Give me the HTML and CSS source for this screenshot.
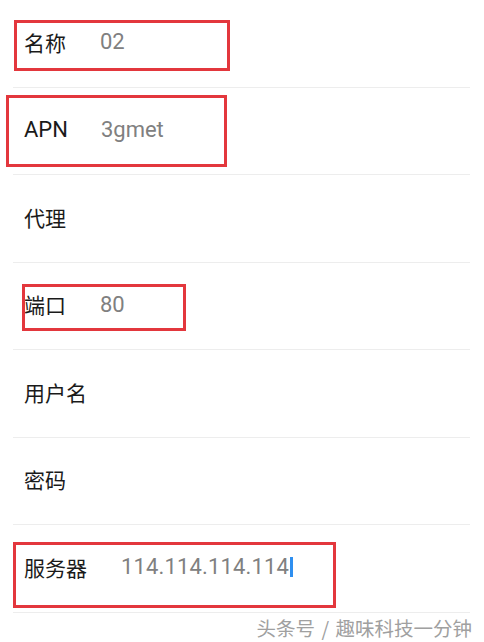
FILE: index.html
```html
<!DOCTYPE html>
<html lang="zh-CN">
<head>
<meta charset="utf-8">
<title>APN 设置</title>
<link rel="stylesheet" href="styles.css">
</head>
<body>
<div class="screen">
  <ul class="list">
    <li class="row"><span class="label">名称</span><span class="value">02</span></li>
    <li class="row"><span class="label latin">APN</span><span class="value">3gmet</span></li>
    <li class="row"><span class="label">代理</span></li>
    <li class="row"><span class="label">端口</span><span class="value">80</span></li>
    <li class="row"><span class="label">用户名</span></li>
    <li class="row"><span class="label">密码</span></li>
    <li class="row"><span class="label">服务器</span><span class="value wide">114.114.114.114<span class="caret"></span></span></li>
  </ul>
  <div class="mark mark-1"></div>
  <div class="mark mark-2"></div>
  <div class="mark mark-3"></div>
  <div class="mark mark-4"></div>
  <div class="watermark">头条号 / 趣味科技一分钟</div>
</div>
</body>
</html>
```

FILE: styles.css
```css
* { box-sizing: border-box; }
html, body { margin: 0; padding: 0; background: #fff; }
body {
  font-family: Roboto, "Noto Sans CJK SC", sans-serif;
  color: #1a1a1a;
}
.screen {
  position: relative;
  width: 484px;
  height: 642px;
  overflow: hidden;
  background: #fff;
}
.list {
  list-style: none;
  margin: 0 14px 0 13px;
  padding: 0;
}
.row {
  display: flex;
  align-items: center;
  height: 87.5px;
  padding-left: 11px;
  padding-bottom: 2px;
  border-bottom: 1px solid #ededed;
}
.label {
  font-family: "Noto Sans CJK SC", sans-serif;
  font-size: 21px;
  color: #1a1a1a;
  margin-right: 34px;
  line-height: 1;
}
.label.latin {
  font-family: Roboto, sans-serif;
  font-size: 22px;
  margin-right: 33px;
}
.value {
  font-family: Roboto, sans-serif;
  font-size: 22px;
  color: #808080;
  line-height: 1;
  display: inline-flex;
  align-items: center;
}
.value.wide { letter-spacing: 0.15px; }
.caret {
  display: inline-block;
  width: 3px;
  height: 20px;
  background: #2e8ff0;
  margin-left: 1px;
}
.mark {
  position: absolute;
  border: 3px solid #e3373d;
}
.mark-1 { left: 14px; top: 20px; width: 216px; height: 51px; }
.mark-2 { left: 6px; top: 95px; width: 221px; height: 72px; }
.mark-3 { left: 22px; top: 284px; width: 164px; height: 47px; }
.mark-4 { left: 13px; top: 542px; width: 323px; height: 66px; }
.watermark {
  position: absolute;
  right: 12px;
  bottom: 5px;
  font-family: "Noto Sans CJK SC", sans-serif;
  font-size: 19.5px;
  line-height: 1;
  color: #a0a0a0;
  text-shadow: 0 0 2px #fff, 0 0 2px #fff;
  white-space: nowrap;
  word-spacing: 2px;
}
```
